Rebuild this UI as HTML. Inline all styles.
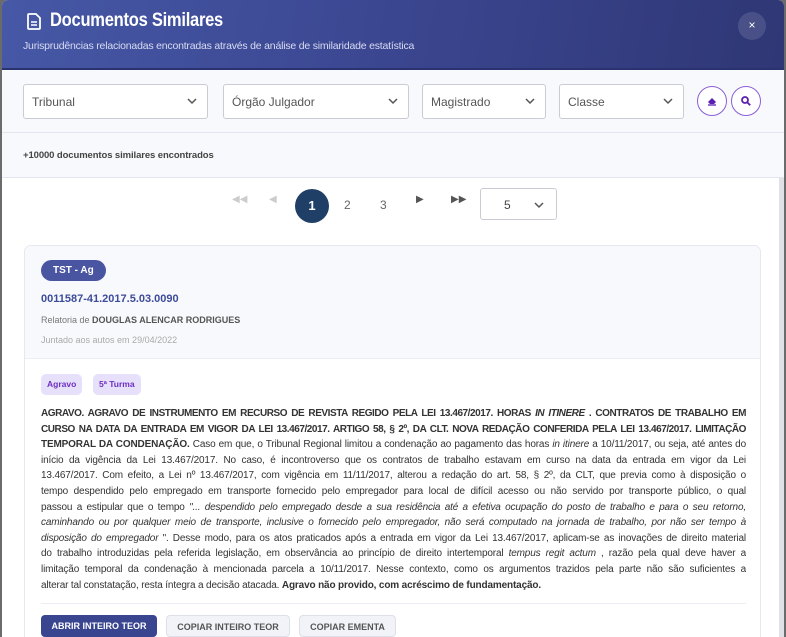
<!DOCTYPE html>
<html><head><meta charset="utf-8"><style>
*{box-sizing:border-box;margin:0;padding:0}
body{width:786px;height:637px;overflow:hidden;background:#6b6b6b;font-family:"Liberation Sans",sans-serif;position:relative}
.modal{position:absolute;left:2px;top:0;width:782px;height:637px;background:#fff;border-radius:6px 6px 0 0;overflow:hidden}
.hdr{height:70px;background:linear-gradient(100deg,#4658a6 0%,#3b4690 50%,#2f3775 100%);position:relative;border-bottom:2px solid #2b3270}
.hdr h1{position:absolute;left:48px;top:10px;color:#fff;font-size:19px;font-weight:bold;letter-spacing:-0.3px;transform:scaleX(0.87);transform-origin:0 0}
.hdr p{position:absolute;left:21px;top:40px;color:#d8dcf2;font-size:10.5px;letter-spacing:-0.2px}
.close{position:absolute;left:736px;top:12px;width:28px;height:28px;border-radius:50%;background:rgba(255,255,255,0.12);color:#fff;font-size:12px;text-align:center;line-height:27px}
.filters{position:absolute;top:70px;left:0;width:782px;height:63px;background:#f8f9fc;border-bottom:1px solid #e3e6ee}
.sel{position:absolute;top:14px;height:35px;border:1px solid #c9ccd3;border-radius:3px;background:#fff;font-size:12px;color:#555;padding:10px 0 0 8px}
.sel svg{position:absolute;right:10px;top:13px}
.cbtn{position:absolute;top:16px;width:30px;height:30px;border:1.5px solid #8a5fd6;border-radius:50%;background:#fff}
.cbtn svg{position:absolute;left:8px;top:8px}
.count{position:absolute;top:133px;left:0;width:782px;height:45px;background:#f8f9fc;border-bottom:1px solid #e3e6ee;font-size:9.5px;font-weight:bold;color:#444;padding:17px 0 0 21px;letter-spacing:-0.1px}
.sb{position:absolute;left:777px;top:178px;width:5px;height:459px;background:#dfe1e6}
.pg{position:absolute;top:190px;font-size:12px;color:#666}
.card{position:absolute;left:22px;top:245px;width:737px;height:420px;border:1px solid #e6e8ee;border-radius:7px;background:#fff;overflow:hidden}
.ctop{height:113px;background:#f8f9fc;border-bottom:1px solid #eceef3;position:relative}
.badge{position:absolute;left:16px;top:14px;height:21px;padding:0 12px;border-radius:11px;background:#4a55a2;color:#fff;font-size:10px;font-weight:bold;line-height:21px}
.num{position:absolute;left:16px;top:47px;color:#3d4b9b;font-size:11px;font-weight:bold}
.rel{position:absolute;left:16px;top:69px;color:#777;font-size:9px}
.rel b{color:#555}
.jun{position:absolute;left:16px;top:89px;color:#aaa;font-size:9px}
.tag{position:absolute;top:128px;height:21px;padding:0 6px;border-radius:5px;background:#e7e0fb;color:#6d2fc0;font-size:8.5px;font-weight:bold;line-height:21px}
.txt{position:absolute;left:16px;top:160px;width:705px;font-size:10px;line-height:15.6px;color:#333;letter-spacing:-0.15px}
.txt div{text-align:justify;text-align-last:justify;white-space:nowrap;overflow:hidden}
.txt div.b{letter-spacing:-0.45px}
.txt div.l{text-align-last:left}
.hr{position:absolute;left:16px;top:357px;width:705px;height:1px;background:#eceef3}
.btn{position:absolute;top:369px;height:22px;border-radius:4px;font-size:9px;font-weight:bold;line-height:22px;text-align:center}
</style></head><body>
<div class="modal">
<div class="hdr">
<svg style="position:absolute;left:25px;top:13px" width="14" height="17" viewBox="0 0 14 17"><path d="M2 1h7l4 4v10a1 1 0 0 1-1 1H2a1 1 0 0 1-1-1V2a1 1 0 0 1 1-1z" fill="none" stroke="#fff" stroke-width="1.8"/><path d="M4 9h6M4 12h6" stroke="#fff" stroke-width="1.5"/></svg>
<h1>Documentos Similares</h1>
<p>Jurisprudências relacionadas encontradas através de análise de similaridade estatística</p>
<div class="close">×</div>
</div>
<div class="filters">
<div class="sel" style="left:21px;width:185px">Tribunal<svg width="10" height="7"><path d="M1 1l4 4 4-4" fill="none" stroke="#555" stroke-width="1.5"/></svg></div>
<div class="sel" style="left:221px;width:186px">Órgão Julgador<svg width="10" height="7"><path d="M1 1l4 4 4-4" fill="none" stroke="#555" stroke-width="1.5"/></svg></div>
<div class="sel" style="left:420px;width:124px">Magistrado<svg width="10" height="7"><path d="M1 1l4 4 4-4" fill="none" stroke="#555" stroke-width="1.5"/></svg></div>
<div class="sel" style="left:557px;width:125px">Classe<svg width="10" height="7"><path d="M1 1l4 4 4-4" fill="none" stroke="#555" stroke-width="1.5"/></svg></div>
<div class="cbtn" style="left:695px"><svg width="12" height="12" viewBox="0 0 12 12"><path d="M2 7l4-4 4 4-2 2H4z" fill="#5b1fb0"/><path d="M2 10h8" stroke="#5b1fb0" stroke-width="1.3"/></svg></div>
<div class="cbtn" style="left:729px"><svg width="12" height="12" viewBox="0 0 12 12"><circle cx="5" cy="5" r="3" fill="none" stroke="#5b1fb0" stroke-width="1.8"/><path d="M7.2 7.2l3 3" stroke="#5b1fb0" stroke-width="1.8"/></svg></div>
</div>
<div class="count">+10000 documentos similares encontrados</div>
<div class="sb"></div>
<div class="pg" style="left:230px;top:194px;color:#ccc;font-size:10px">◀◀</div>
<div class="pg" style="left:267px;top:194px;color:#ccc;font-size:10px">◀</div>
<div style="position:absolute;left:293px;top:189px;width:34px;height:34px;border-radius:50%;background:#1f3f66;color:#fff;font-size:13px;font-weight:bold;text-align:center;line-height:34px">1</div>
<div class="pg" style="left:342px;top:198px">2</div>
<div class="pg" style="left:378px;top:198px">3</div>
<div class="pg" style="left:414px;top:194px;color:#555;font-size:10px">▶</div>
<div class="pg" style="left:449px;top:194px;color:#555;font-size:10px">▶▶</div>
<div style="position:absolute;left:478px;top:188px;width:77px;height:32px;border:1px solid #c9ccd3;border-radius:3px;font-size:12px;color:#444;padding:9px 0 0 23px">5<svg style="position:absolute;right:12px;top:13px" width="10" height="7"><path d="M1 1l4 4 4-4" fill="none" stroke="#555" stroke-width="1.5"/></svg></div>
<div class="card">
<div class="ctop">
<div class="badge">TST - Ag</div>
<div class="num">0011587-41.2017.5.03.0090</div>
<div class="rel">Relatoria de <b>DOUGLAS ALENCAR RODRIGUES</b></div>
<div class="jun">Juntado aos autos em 29/04/2022</div>
</div>
<div class="tag" style="left:16px">Agravo</div>
<div class="tag" style="left:68px">5ª Turma</div>
<div class="txt">
<div class="b"><b>AGRAVO. AGRAVO DE INSTRUMENTO EM RECURSO DE REVISTA REGIDO PELA LEI 13.467/2017. HORAS <i>IN ITINERE</i> . CONTRATOS DE TRABALHO EM</b></div>
<div class="b"><b>CURSO NA DATA DA ENTRADA EM VIGOR DA LEI 13.467/2017. ARTIGO 58, § 2º, DA CLT. NOVA REDAÇÃO CONFERIDA PELA LEI 13.467/2017. LIMITAÇÃO</b></div>
<div><b>TEMPORAL DA CONDENAÇÃO.</b> Caso em que, o Tribunal Regional limitou a condenação ao pagamento das horas <i>in itinere</i> a 10/11/2017, ou seja, até antes do</div>
<div>início da vigência da Lei 13.467/2017. No caso, é incontroverso que os contratos de trabalho estavam em curso na data da entrada em vigor da Lei</div>
<div>13.467/2017. Com efeito, a Lei nº 13.467/2017, com vigência em 11/11/2017, alterou a redação do art. 58, § 2º, da CLT, que previa como à disposição o</div>
<div>tempo despendido pelo empregado em transporte fornecido pelo empregador para local de difícil acesso ou não servido por transporte público, o qual</div>
<div>passou a estipular que o tempo <i>"... despendido pelo empregado desde a sua residência até a efetiva ocupação do posto de trabalho e para o seu retorno,</i></div>
<div><i>caminhando ou por qualquer meio de transporte, inclusive o fornecido pelo empregador, não será computado na jornada de trabalho, por não ser tempo à</i></div>
<div><i>disposição do empregador</i> ". Desse modo, para os atos praticados após a entrada em vigor da Lei 13.467/2017, aplicam-se as inovações de direito material</div>
<div>do trabalho introduzidas pela referida legislação, em observância ao princípio de direito intertemporal <i>tempus regit actum</i> , razão pela qual deve haver a</div>
<div>limitação temporal da condenação à mencionada parcela a 10/11/2017. Nesse contexto, como os argumentos trazidos pela parte não são suficientes a</div>
<div class="l">alterar tal constatação, resta íntegra a decisão atacada. <b>Agravo não provido, com acréscimo de fundamentação.</b></div>
</div>
<div class="hr"></div>
<div class="btn" style="left:16px;width:116px;background:#3a4590;color:#fff">ABRIR INTEIRO TEOR</div>
<div class="btn" style="left:141px;width:124px;background:#f1f3f8;border:1px solid #dde0e8;color:#555">COPIAR INTEIRO TEOR</div>
<div class="btn" style="left:274px;width:97px;background:#f1f3f8;border:1px solid #dde0e8;color:#555">COPIAR EMENTA</div>
</div>
</div>
</body></html>
